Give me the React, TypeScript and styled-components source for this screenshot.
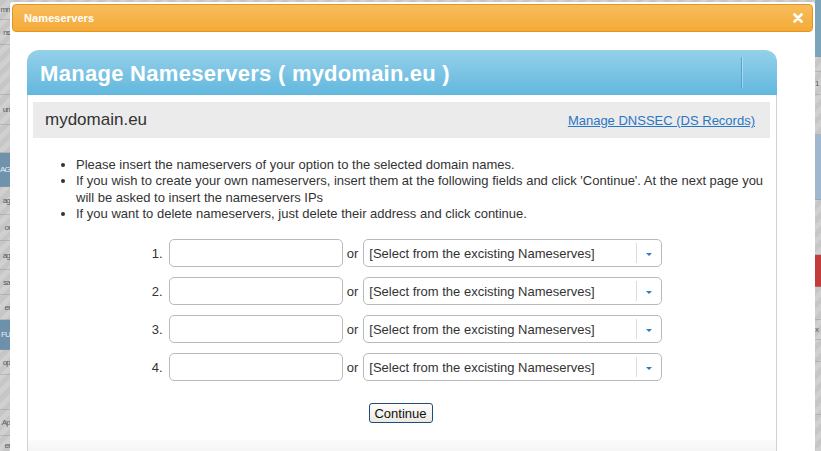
import React from "react";
import styled, { createGlobalStyle } from "styled-components";

const GlobalStyle = createGlobalStyle`
  html, body { margin: 0; padding: 0; }
  body {
    width: 821px;
    height: 451px;
    overflow: hidden;
    font-family: "Liberation Sans", Arial, sans-serif;
  }
`;

const Page = styled.div`
  display: flex;
  align-items: flex-start;
  width: 821px;
  height: 451px;
  overflow: hidden;
  background: repeating-linear-gradient(135deg, #c6c6c6 0 5px, #d0d0d0 5px 10px);
`;

const Strip = styled.div<{ $w: number }>`
  width: ${(p) => p.$w}px;
  flex: none;
  display: flex;
  flex-direction: column;
  overflow: hidden;
`;

const StripCell = styled.div<{ $h: number; $bg?: string; $align?: string; $color?: string }>`
  height: ${(p) => p.$h}px;
  flex: none;
  display: flex;
  align-items: center;
  justify-content: ${(p) => p.$align || "flex-end"};
  background: ${(p) => p.$bg || "transparent"};
  border-bottom: 1px solid rgba(150, 150, 150, 0.45);
  box-sizing: border-box;
  font-size: 8px;
  letter-spacing: -0.8px;
  color: ${(p) => p.$color || "#5a5a5a"};
  white-space: nowrap;
`;

const Modal = styled.div`
  width: 805px;
  height: 449px;
  flex: none;
  margin-top: 2px;
  box-sizing: border-box;
  padding: 2px;
  background: #ffffff;
  border-radius: 3px 3px 0 0;
  display: flex;
  flex-direction: column;
  overflow: hidden;
`;

const TitleBar = styled.div`
  flex: none;
  height: 28px;
  box-sizing: border-box;
  border: 1px solid #e3961f;
  border-radius: 4px;
  background: linear-gradient(#f7bc5c, #f5aa38);
  display: flex;
  align-items: center;
  justify-content: space-between;
  padding: 0 9px 0 11px;
`;

const TitleText = styled.span`
  color: #ffffff;
  font-weight: bold;
  font-size: 11px;
  font-family: "Liberation Sans", Arial, sans-serif;
  letter-spacing: 0.1px;
`;

const CloseButton = styled.span`
  display: flex;
  width: 10px;
  height: 10px;
`;

const ModalBody = styled.div`
  flex: none;
  padding: 18px 37px 0 15px;
`;

const Panel = styled.div`
  width: 750px;
  display: flex;
  flex-direction: column;
`;

const PanelHeader = styled.div`
  flex: none;
  height: 45px;
  border-radius: 12px 12px 0 0;
  background: linear-gradient(#95d1ea, #62b7de);
  display: flex;
  align-items: center;
  justify-content: space-between;
  padding: 0 0 0 13px;
`;

const PanelTitle = styled.h1`
  margin: 2px 0 0;
  font-family: "Liberation Sans", Arial, sans-serif;
  font-weight: bold;
  font-size: 22px;
  color: #ffffff;
  letter-spacing: 0.3px;
`;

const TitleSmall = styled.span`
  letter-spacing: 0.2px;
`;

const HeaderDivider = styled.div`
  width: 1px;
  height: 31px;
  margin-right: 35px;
  background: #4fa6cf;
  box-shadow: 1px 0 0 rgba(255, 255, 255, 0.35);
`;

const PanelBody = styled.div`
  border-left: 1px solid #d2d2d2;
  border-right: 1px solid #d2d2d2;
  padding: 7px 6px 17px 5px;
  display: flex;
  flex-direction: column;
`;

const DomainBar = styled.div`
  height: 36px;
  background: #ebebeb;
  display: flex;
  align-items: center;
  justify-content: space-between;
  padding: 0 15px 0 12px;
`;

const DomainName = styled.span`
  font-size: 17px;
  color: #333333;
`;

const Link = styled.a`
  font-size: 13px;
  color: #2a76c6;
  text-decoration: underline;
  cursor: pointer;
`;

const Notes = styled.ul`
  margin: 19px 0 0;
  padding: 0 0 0 43px;
  font-size: 13px;
  line-height: 16.3px;
  color: #333333;
  white-space: nowrap;
`;

const Note = styled.li`
  list-style: disc;
`;

const Form = styled.div`
  margin-top: 17px;
  display: flex;
  flex-direction: column;
  align-items: center;
  gap: 10px;
`;

const Row = styled.div`
  display: flex;
  align-items: center;
  height: 28px;
  margin-left: 2px;
`;

const RowLabel = styled.span`
  width: 20px;
  text-align: right;
  font-size: 13px;
  color: #333333;
  margin-right: 6px;
`;

const TextInput = styled.input`
  width: 174px;
  height: 28px;
  box-sizing: border-box;
  border: 1px solid #b9b9b9;
  border-radius: 5px;
  background: #ffffff;
  padding: 0 6px;
  font-family: "Liberation Sans", Arial, sans-serif;
  font-size: 13px;
  outline: none;
`;

const Or = styled.span`
  font-size: 13px;
  color: #333333;
  margin: 0 5px 0 4px;
`;

const Select = styled.div`
  width: 299px;
  height: 28px;
  box-sizing: border-box;
  border: 1px solid #b9b9b9;
  border-radius: 5px;
  background: #ffffff;
  display: flex;
  align-items: center;
`;

const SelectText = styled.span`
  flex: 1;
  padding-left: 5px;
  font-size: 13px;
  color: #333333;
  white-space: nowrap;
`;

const SelectDivider = styled.span`
  width: 1px;
  height: 20px;
  background: #dcdcdc;
`;

const Arrow = styled.span`
  width: 24px;
  display: flex;
  justify-content: center;
  align-items: center;
  &::after {
    content: "";
    border-left: 3.5px solid transparent;
    border-right: 3.5px solid transparent;
    border-top: 3.5px solid #2f7bc4;
    margin-top: 2px;
  }
`;

const Actions = styled.div`
  margin-top: 22px;
  display: flex;
  justify-content: center;
`;

const Button = styled.button`
  width: 64px;
  height: 20px;
  padding: 0;
  box-sizing: border-box;
  border: 1px solid #1c4c7c;
  border-radius: 3px;
  background: linear-gradient(#fdfdfb, #ebe9e1);
  font-family: "Liberation Sans", Arial, sans-serif;
  font-size: 13px;
  color: #111111;
  margin-left: -2px;
`;

const PanelFooter = styled.div`
  height: 20px;
  border-left: 1px solid #d2d2d2;
  border-right: 1px solid #d2d2d2;
  background: linear-gradient(#fafafa, #f2f2f2);
`;

type Seg = { h: number; text?: string; bg?: string; color?: string; align?: string };

const leftSegs: Seg[] = [
  { h: 20, text: "mn" },
  { h: 25, text: "ns" },
  { h: 50 },
  { h: 30, text: "un" },
  { h: 28 },
  { h: 34, text: "AG", bg: "#6f93ad", color: "#e8eef3" },
  { h: 28, text: "ag" },
  { h: 26, text: "or" },
  { h: 29, text: "ag" },
  { h: 25, text: "sa" },
  { h: 25, text: "er" },
  { h: 30, text: "FU", bg: "#6d91ab", color: "#e8eef3" },
  { h: 25, text: "op" },
  { h: 35 },
  { h: 26, text: "Ap" },
  { h: 20, text: "er" },
];

const rightSegs: Seg[] = [
  { h: 57, bg: "#7ba3ba" },
  { h: 15 },
  { h: 23, text: "1", align: "flex-start" },
  { h: 40 },
  { h: 65, bg: "#9fb7cf", align: "flex-start" },
  { h: 55 },
  { h: 32, bg: "#c33c3c" },
  { h: 33 },
  { h: 20, text: "x", align: "flex-start" },
  { h: 22 },
  { h: 53 },
  { h: 40 },
];

const notes = [
  ["Please insert the nameservers of your option to the selected domain names."],
  [
    "If you wish to create your own nameservers, insert them at the following fields and click 'Continue'. At the next page you",
    "will be asked to insert the nameservers IPs",
  ],
  ["If you want to delete nameservers, just delete their address and click continue."],
];

function SideStrip({ w, segs }: { w: number; segs: Seg[] }) {
  return (
    <Strip $w={w}>
      {segs.map((s, i) => (
        <StripCell key={i} $h={s.h} $bg={s.bg} $color={s.color} $align={s.align}>
          {s.text}
        </StripCell>
      ))}
    </Strip>
  );
}

export default function App() {
  return (
    <>
      <GlobalStyle />
      <Page>
        <SideStrip w={10} segs={leftSegs} />
        <Modal>
          <TitleBar>
            <TitleText>Nameservers</TitleText>
            <CloseButton>
              <svg width="10" height="10" viewBox="0 0 10 10">
                <path d="M1.5 1.5 L8.5 8.5 M8.5 1.5 L1.5 8.5" stroke="#ffffff" strokeWidth="2.6" strokeLinecap="round" />
              </svg>
            </CloseButton>
          </TitleBar>
          <ModalBody>
            <Panel>
              <PanelHeader>
                <PanelTitle>
                  Manage Nameservers <TitleSmall>( mydomain.eu )</TitleSmall>
                </PanelTitle>
                <HeaderDivider />
              </PanelHeader>
              <PanelBody>
                <DomainBar>
                  <DomainName>mydomain.eu</DomainName>
                  <Link>Manage DNSSEC (DS Records)</Link>
                </DomainBar>
                <Notes>
                  {notes.map((lines, i) => (
                    <Note key={i}>
                      {lines.map((l, j) => (
                        <React.Fragment key={j}>
                          {j > 0 && <br />}
                          {l}
                        </React.Fragment>
                      ))}
                    </Note>
                  ))}
                </Notes>
                <Form>
                  {[1, 2, 3, 4].map((n) => (
                    <Row key={n}>
                      <RowLabel>{n}.</RowLabel>
                      <TextInput type="text" />
                      <Or>or</Or>
                      <Select>
                        <SelectText>[Select from the excisting Nameserves]</SelectText>
                        <SelectDivider />
                        <Arrow />
                      </Select>
                    </Row>
                  ))}
                </Form>
                <Actions>
                  <Button>Continue</Button>
                </Actions>
              </PanelBody>
              <PanelFooter />
            </Panel>
          </ModalBody>
        </Modal>
        <SideStrip w={6} segs={rightSegs} />
      </Page>
    </>
  );
}
